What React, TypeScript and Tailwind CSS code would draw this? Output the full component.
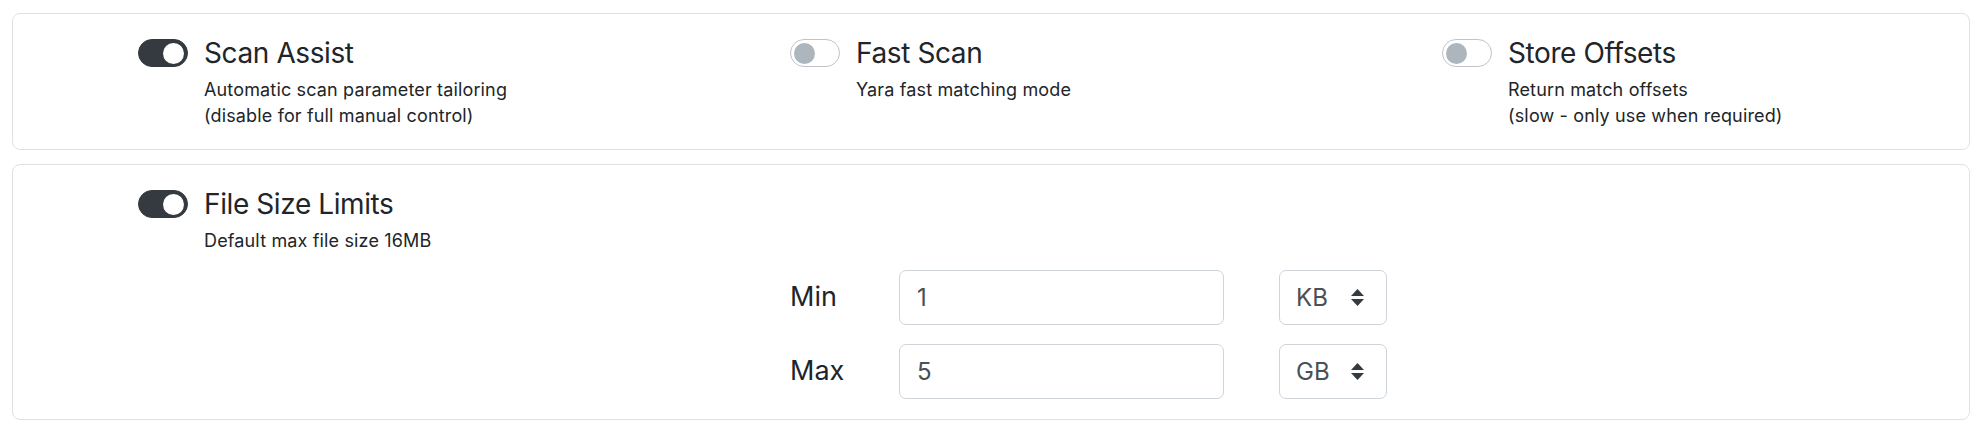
import React from 'react'

function Toggle({ on }: { on: boolean }) {
  if (on) {
    return (
      <span className="flex h-[28px] w-[50px] shrink-0 items-center justify-end rounded-full border border-[#343a40] bg-[#343a40] px-[3px]">
        <span className="h-[21px] w-[21px] rounded-full bg-white" />
      </span>
    )
  }
  return (
    <span className="flex h-[28px] w-[50px] shrink-0 items-center justify-start rounded-full border border-[#bfc4ca] bg-white px-[3px]">
      <span className="h-[21px] w-[21px] rounded-full bg-[#adb5bd]" />
    </span>
  )
}

function Setting({ on, title, lines }: { on: boolean; title: string; lines: string[] }) {
  return (
    <div className="pl-[125px]">
      <div className="flex items-center gap-[16px]">
        <Toggle on={on} />
        <span className="text-[28px] leading-[36px] tracking-[-0.4px] text-[#212529]">{title}</span>
      </div>
      <div className="mt-[6px] pl-[66px] text-[18px] leading-[26px] tracking-[0.15px] text-[#212529]">
        {lines.map((l) => (
          <div key={l}>{l}</div>
        ))}
      </div>
    </div>
  )
}

function Arrows() {
  return (
    <svg width="13" height="17" viewBox="0 0 13 17" className="shrink-0">
      <path d="M6.5 0 L13 7 L0 7 Z" fill="#343a40" />
      <path d="M0 10 L13 10 L6.5 17 Z" fill="#343a40" />
    </svg>
  )
}

function SizeRow({ label, value, unit }: { label: string; value: string; unit: string }) {
  return (
    <div className="flex items-center">
      <span className="w-[109px] text-[27px] text-[#212529]">{label}</span>
      <div className="flex h-[55px] w-[325px] items-center rounded-[7px] border border-[#ced4da] bg-white px-[17px] text-[24px] text-[#495057]">
        {value}
      </div>
      <div className="ml-[55px] flex h-[55px] w-[108px] items-center justify-between rounded-[7px] border border-[#ced4da] bg-white pl-[16px] pr-[22px] text-[24px] text-[#495057]">
        <span>{unit}</span>
        <Arrows />
      </div>
    </div>
  )
}

export default function App() {
  return (
    <div className="min-h-[430px] bg-white pt-[13px] font-['Inter',sans-serif]">
      <div className="ml-[12px] mr-[14px] grid grid-cols-3 rounded-[8px] border border-[#dee2e6] pb-[20px] pt-[21px]">
        <Setting
          on
          title="Scan Assist"
          lines={['Automatic scan parameter tailoring', '(disable for full manual control)']}
        />
        <Setting on={false} title="Fast Scan" lines={['Yara fast matching mode']} />
        <Setting
          on={false}
          title="Store Offsets"
          lines={['Return match offsets', '(slow - only use when required)']}
        />
      </div>

      <div className="ml-[12px] mr-[14px] mt-[14px] grid grid-cols-3 rounded-[8px] border border-[#dee2e6] pb-[20px] pt-[21px]">
        <div className="col-start-1 row-start-1">
          <Setting on title="File Size Limits" lines={['Default max file size 16MB']} />
        </div>
        <div className="col-span-2 col-start-2 row-start-2 mt-[16px] flex flex-col gap-[19px] pl-[125px]">
          <SizeRow label="Min" value="1" unit="KB" />
          <SizeRow label="Max" value="5" unit="GB" />
        </div>
      </div>
    </div>
  )
}
